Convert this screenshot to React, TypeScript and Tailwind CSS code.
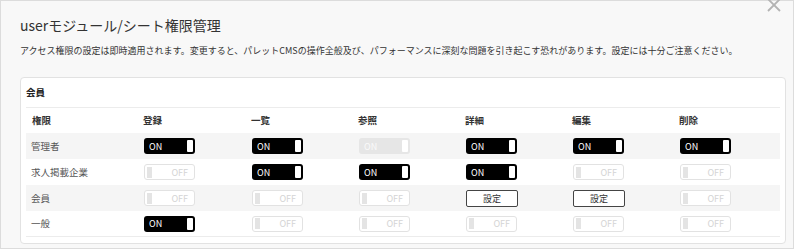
import React from 'react';

type Cell = 'on' | 'off' | 'dim' | 'btn';

const rows: { label: string; cells: Cell[] }[] = [
  { label: '管理者', cells: ['on', 'on', 'dim', 'on', 'on', 'on'] },
  { label: '求人掲載企業', cells: ['off', 'on', 'on', 'on', 'off', 'off'] },
  { label: '会員', cells: ['off', 'off', 'off', 'btn', 'btn', 'off'] },
  { label: '一般', cells: ['on', 'off', 'off', 'off', 'off', 'off'] },
];

const heads = ['権限', '登録', '一覧', '参照', '詳細', '編集', '削除'];

const Switch = ({ kind }: { kind: Cell }) => {
  if (kind === 'btn') {
    return (
      <button className="w-[52px] h-[17px] border border-[#444] rounded-[2px] bg-white text-[9px] text-[#333] leading-none">
        設定
      </button>
    );
  }
  if (kind === 'off') {
    return (
      <div className="w-[51px] h-[16px] border border-[#e2e2e2] rounded-[3px] bg-white flex items-center justify-between pl-[2px] pr-[6px]">
        <span className="w-[5px] h-[11px] bg-[#e4e4e4]" />
        <span className="text-[9px] leading-none text-[#d4d4d4]">OFF</span>
      </div>
    );
  }
  const dim = kind === 'dim';
  return (
    <div
      className={
        'w-[51px] h-[16px] rounded-[3px] flex items-center justify-between pl-[5px] pr-[2px] ' +
        (dim ? 'bg-[#e6e6e6]' : 'bg-black')
      }
    >
      <span className={'text-[9px] leading-none ' + (dim ? 'text-[#fafafa]' : 'text-white')}>ON</span>
      <span className="w-[6px] h-[12px] bg-white rounded-[1px]" />
    </div>
  );
};

const cols = 'grid grid-cols-[111px_108px_107px_107px_107px_107px_1fr]';

export default function App() {
  return (
    <div className="w-[800px] h-[250px] bg-white font-['Noto_Sans_CJK_JP','Noto_Sans',sans-serif]">
      <div className="relative w-[794px] h-[249px] border border-[#dcdcdc] bg-[#f8f8f8] px-[19px] pt-[14px]">
        <svg className="absolute left-[766px] top-[-3px]" width="14" height="14" viewBox="0 0 14 14">
          <path d="M1 1L13 13M13 1L1 13" stroke="#b3b3b3" strokeWidth="1.8" />
        </svg>

        <h1 className="text-[14px] leading-[20px] text-[#333]">userモジュール/シート権限管理</h1>
        <p className="mt-[10px] text-[9px] leading-[12px] text-[#333]">
          アクセス権限の設定は即時適用されます。変更すると、パレットCMSの操作全般及び、パフォーマンスに深刻な問題を引き起こす恐れがあります。設定には十分ご注意ください。
        </p>

        <div className="mt-[20px] w-[766px] bg-white border border-[#e2e2e2] rounded-[4px] px-[5px] pb-[6px]">
          <div className="h-[30px] flex items-center border-b border-[#ececec]">
            <span className="text-[9.5px] font-bold text-[#222]">会員</span>
          </div>
          <div className={cols + ' h-[25px] items-center'}>
            {heads.map((h) => (
              <div key={h} className="pl-[6px] text-[9.5px] font-bold text-[#333]">
                {h}
              </div>
            ))}
          </div>
          {rows.map((r, i) => (
            <div
              key={r.label}
              className={
                cols +
                ' h-[26px] items-center ' +
                (i % 2 === 0 ? 'bg-[#f5f5f5]' : 'bg-white') +
                (i === rows.length - 1 ? ' border-b border-[#ececec]' : '')
              }
            >
              <div className="pl-[5px] text-[9.5px] text-[#555]">{r.label}</div>
              {r.cells.map((c, j) => (
                <div key={j} className="pl-[7px] flex">
                  <Switch kind={c} />
                </div>
              ))}
            </div>
          ))}
        </div>
      </div>
    </div>
  );
}
